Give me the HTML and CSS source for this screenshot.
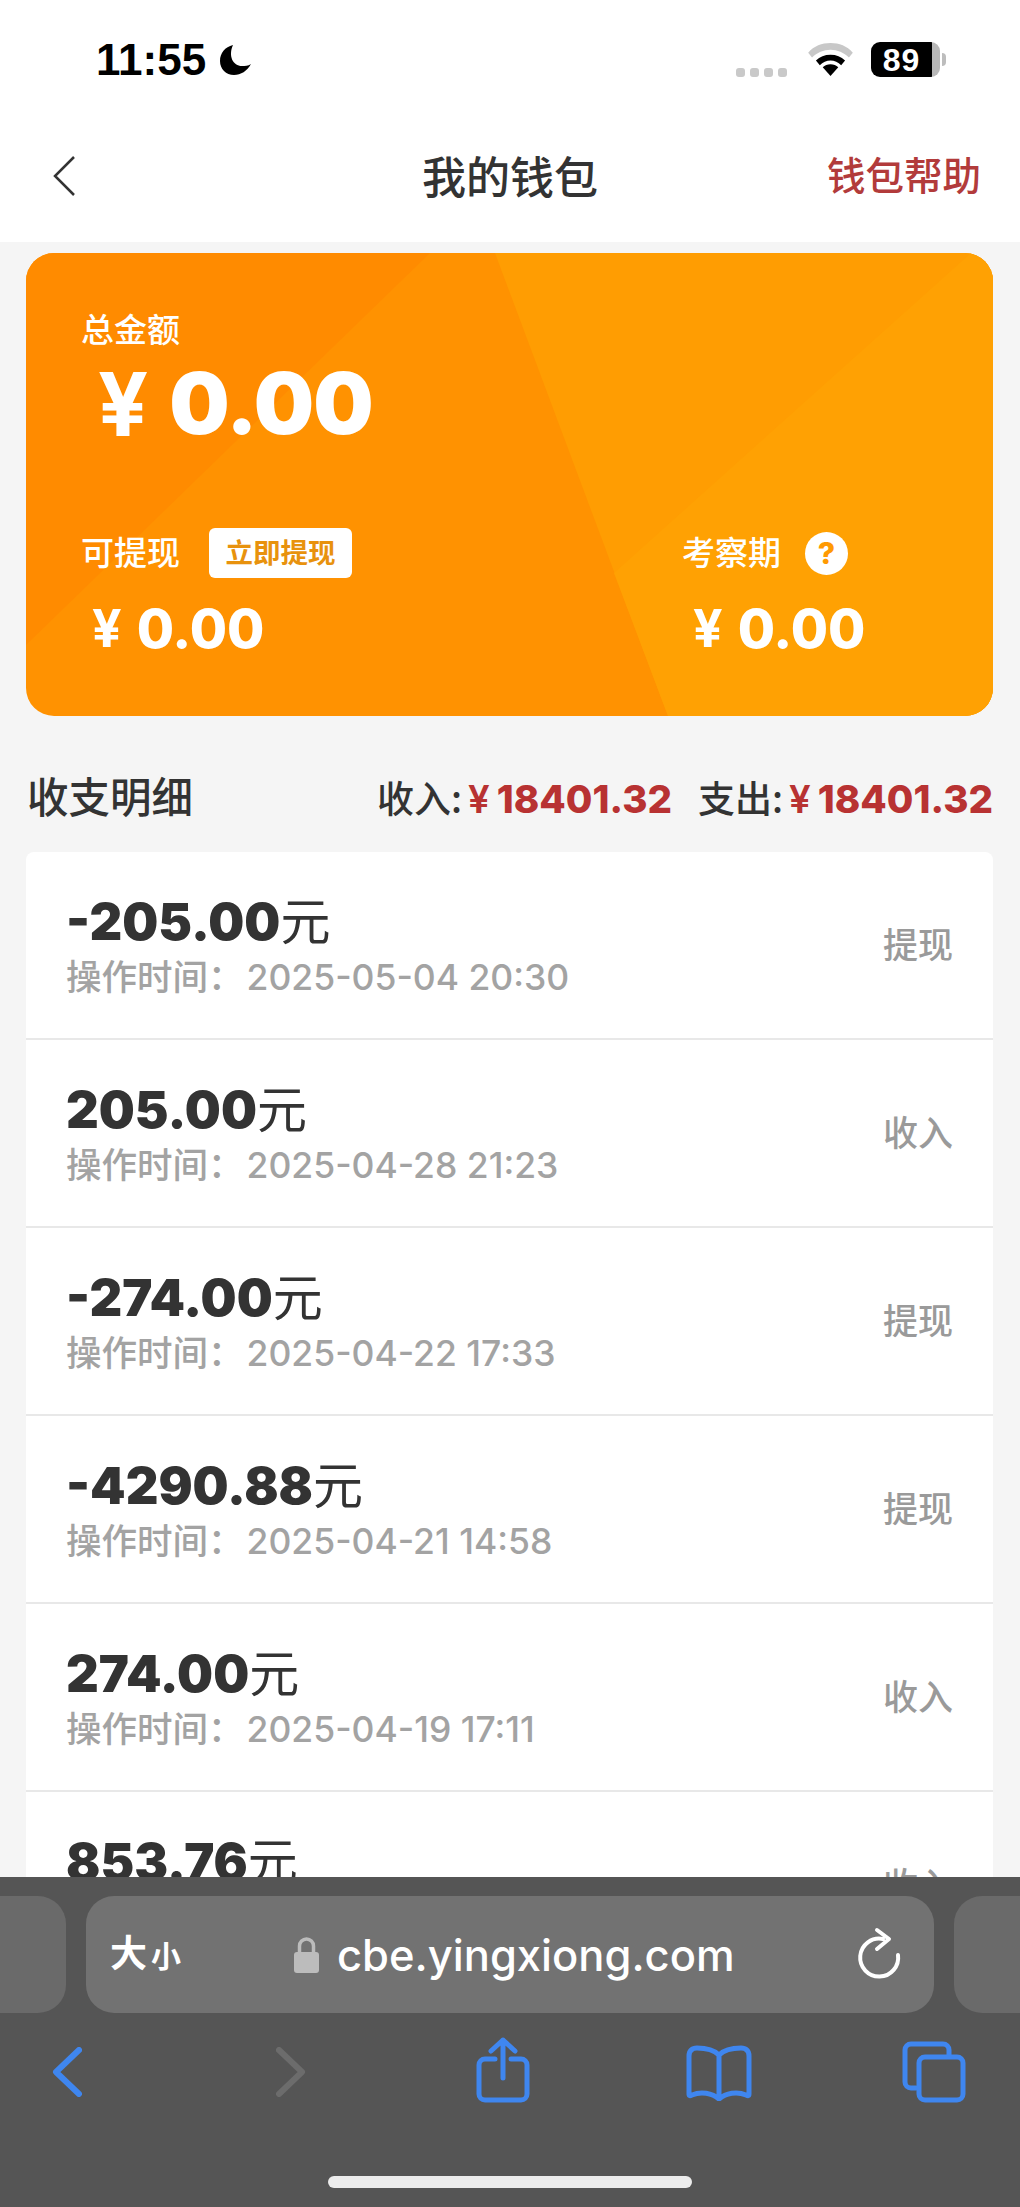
FILE: index.html
```html
<!DOCTYPE html>
<html lang="zh">
<head>
<meta charset="utf-8">
<title>我的钱包</title>
<link rel="stylesheet" href="styles.css">
</head>
<body>
<div class="page">
  <header class="top">
    <div class="status">
      <div class="status-left">
        <span class="clock">11:55</span>
        <svg class="moon" viewBox="0 0 32 32"><path d="M13 1C5 3 0 9 0 17c0 8 6 14 14 14 7 0 13-4 17-11-3 2-6 2-9 2C13 22 8 12 13 1z"/></svg>
      </div>
      <div class="status-right">
        <span class="dots"><i></i><i></i><i></i><i></i></span>
        <svg class="wifi" viewBox="0 0 46 34"><path class="wifi-off" d="M23 0C14 0 6 3 0 10l4 5C9 10 16 7 23 7s14 3 19 8l4-5C40 3 32 0 23 0z"/><path d="M23 12c-6 0-11 2-15 6l4 5c3-3 7-5 11-5s8 2 11 5l4-5c-4-4-9-6-15-6z"/><path d="M23 22c-3 0-6 1-8 3l8 9 8-9c-2-2-5-3-8-3z"/></svg>
        <span class="battery"><b>89</b></span>
      </div>
    </div>
    <nav class="nav">
      <svg class="nav-back" viewBox="0 0 24 40"><path d="M22 1 3 20l19 19"/></svg>
      <h1>我的钱包</h1>
      <a class="nav-help">钱包帮助</a>
    </nav>
  </header>

  <main class="content">
    <section class="card">
      <svg class="card-bg" viewBox="0 0 967 463" preserveAspectRatio="none">
        <rect width="967" height="463" fill="#ff9201"/>
        <path d="M0 0H404L0 392z" fill="#ff8b00"/>
        <path d="M469 0H967V463H642z" fill="#ff9d02"/>
        <path d="M945 0H967V463H642L588 320z" fill="#ffa103"/>
      </svg>
      <div class="card-total">
        <div class="card-label">总金额</div>
        <div class="big-amount"><span class="yen">¥</span><span>0.00</span></div>
      </div>
      <div class="card-sub">
        <div class="sub">
          <div class="sub-head"><span class="card-label">可提现</span><span class="btn">立即提现</span></div>
          <div class="sub-amount"><span class="yen">¥</span><span>0.00</span></div>
        </div>
        <div class="sub">
          <div class="sub-head"><span class="card-label">考察期</span><span class="help">?</span></div>
          <div class="sub-amount"><span class="yen">¥</span><span>0.00</span></div>
        </div>
      </div>
    </section>

    <section class="summary">
      <h2>收支明细</h2>
      <div class="totals">
        <span class="total">收入:<em><span class="yen">¥</span>18401.32</em></span>
        <span class="total">支出:<em><span class="yen">¥</span>18401.32</em></span>
      </div>
    </section>

    <section class="list">
      <article class="row"><div><div class="amt"><b>-205.00</b>元</div><div class="when">操作时间：<span>2025-05-04 20:30</span></div></div><span class="kind">提现</span></article>
      <article class="row"><div><div class="amt"><b>205.00</b>元</div><div class="when">操作时间：<span>2025-04-28 21:23</span></div></div><span class="kind">收入</span></article>
      <article class="row"><div><div class="amt"><b>-274.00</b>元</div><div class="when">操作时间：<span>2025-04-22 17:33</span></div></div><span class="kind">提现</span></article>
      <article class="row"><div><div class="amt"><b>-4290.88</b>元</div><div class="when">操作时间：<span>2025-04-21 14:58</span></div></div><span class="kind">提现</span></article>
      <article class="row"><div><div class="amt"><b>274.00</b>元</div><div class="when">操作时间：<span>2025-04-19 17:11</span></div></div><span class="kind">收入</span></article>
      <article class="row"><div><div class="amt"><b>853.76</b>元</div><div class="when"></div></div><span class="kind">收入</span></article>
    </section>
  </main>

  <footer class="browser">
    <div class="tabs-strip">
      <div class="pill pill-side"></div>
      <div class="pill pill-main">
        <span class="aa"><span class="aa-big">大</span><span class="aa-small">小</span></span>
        <span class="addr">
          <svg class="lock" viewBox="0 0 25 36"><rect class="lock-body" y="15" width="25" height="21" rx="3"/><path class="lock-hook" d="M5.500 16V9a7 7 0 0 1 14 0v7"/></svg>
          <span class="url">cbe.yingxiong.com</span>
        </span>
        <svg class="reload" viewBox="0 0 50 54"><path d="M43 28A19 19 0 1 1 28 12M22 3l12 9-12 10"/></svg>
      </div>
      <div class="pill pill-side"></div>
    </div>
    <div class="tools">
      <svg class="tool t-back" viewBox="0 0 30 50"><path d="M27 3 4 25l23 22"/></svg>
      <svg class="tool t-fwd" viewBox="0 0 30 50"><path d="M3 3l23 22L3 47"/></svg>
      <svg class="tool t-share" viewBox="0 0 54 66"><path d="M19 22H9a6 6 0 0 0-6 6v29a6 6 0 0 0 6 6h36a6 6 0 0 0 6-6V28a6 6 0 0 0-6-6H35M27 41V3M15 14 27 3l12 11"/></svg>
      <svg class="tool t-book" viewBox="0 0 66 56"><path d="M33 50V10C28 5 20 3 11 3 6 3 3 6 3 11v38c0 2 1 2 3 1 9-4 20-2 27 4 7-6 18-8 27-4 2 1 3 1 3-1V11c0-5-3-8-8-8-9 0-17 2-22 7"/></svg>
      <svg class="tool t-tabs" viewBox="0 0 64 62"><path d="M14 47H9a6 6 0 0 1-6-6V9a6 6 0 0 1 6-6h32a6 6 0 0 1 6 6v5"/><rect x="17" y="16" width="44" height="43" rx="6"/></svg>
    </div>
    <div class="home"></div>
  </footer>
</div>
</body>
</html>
```
FILE: styles.css
```css
* { box-sizing: border-box; }
html, body { margin: 0; padding: 0; }
body { font-family: "Inter", "Noto Sans CJK SC", sans-serif; background: #f5f5f5; color: #333; }
.page { position: relative; width: 1020px; height: 2207px; overflow: hidden; background: #f5f5f5; }

.top { background: #fff; height: 242px; }
.status { height: 122px; display: flex; justify-content: space-between; align-items: flex-start; padding: 39px 80px 0 96px; }
.status-left { display: flex; align-items: center; gap: 14px; }
.clock { font-family: "Liberation Sans", sans-serif; font-weight: 700; font-size: 44px; line-height: 42px; color: #000; }
.moon { width: 32px; height: 32px; fill: #000; }
.status-right { display: flex; align-items: flex-start; padding-top: 4px; }
.dots { display: flex; gap: 5px; margin-right: 21px; margin-top: 25px; }
.dots i { width: 9px; height: 9px; border-radius: 3px; background: #c9c9c9; }
.wifi { width: 45px; height: 33px; fill: #000; margin-right: 18px; }
.wifi .wifi-off { fill: #c8c8c8; }
.battery { position: relative; width: 69px; height: 35px; margin-top: -1px; border-radius: 9px; background: linear-gradient(90deg, #000 88%, #b8b8b8 88%); display: flex; align-items: center; justify-content: center; padding-right: 8px; }
.battery::after { content: ""; position: absolute; right: -6px; top: 11px; width: 4px; height: 13px; border-radius: 0 4px 4px 0; background: #bdbdbd; }
.battery b { font-family: "Liberation Sans", sans-serif; font-size: 32px; line-height: 32px; color: #fff; letter-spacing: 1px; }

.nav { position: relative; height: 120px; display: flex; align-items: center; justify-content: center; padding-bottom: 8px; }
.nav-back { position: absolute; left: 52px; top: 34px; width: 24px; height: 40px; fill: none; stroke: #333; stroke-width: 2.500; }
.nav h1 { margin: 0; font-size: 44px; font-weight: 500; line-height: 60px; color: #333; }
.nav-help { position: absolute; right: 39px; top: 24px; font-size: 38.500px; font-weight: 500; line-height: 60px; color: #b23b3b; }

.content { padding: 11px 27px 0 26px; }
.card { position: relative; height: 463px; border-radius: 28px; overflow: hidden; color: #fff; padding: 52px 55px 0; }
.card-bg { position: absolute; left: 0; top: 0; width: 100%; height: 100%; }
.card-total, .card-sub { position: relative; }
.card-label { font-size: 33px; font-weight: 500; line-height: 50px; color: #fff; }
.big-amount { display: flex; align-items: center; height: 84px; margin-top: 7px; padding-left: 17px; font-family: "Inter", sans-serif; font-weight: 900; font-size: 85px; line-height: 84px; letter-spacing: -1px; }
.big-amount .yen { margin-right: 22px; font-weight: 700; font-size: 88px; }
.card-sub { display: flex; margin-top: 81px; }
.sub:first-child { width: 601px; }
.sub-head { display: flex; align-items: center; height: 52px; }
.btn { margin-left: 29px; width: 143px; height: 50px; border-radius: 6px; background: #fff; color: #e8920d; font-size: 27.500px; font-weight: 700; text-align: center; line-height: 50px; }
.help { margin-left: 24px; width: 43px; height: 43px; border-radius: 50%; background: #fff; color: #ff9a02; font-size: 30px; font-weight: 800; text-align: center; line-height: 43px; }
.sub-amount { display: flex; align-items: center; height: 52px; margin-top: 24px; padding-left: 11px; font-weight: 800; font-size: 54px; line-height: 52px; }
.sub-amount .yen { margin-right: 15px; font-weight: 700; font-size: 52px; }

.summary { display: flex; justify-content: space-between; align-items: center; height: 136px; padding: 27px 0 0 1px; }
.summary h2 { margin: 0; font-size: 41.500px; font-weight: 500; line-height: 56px; color: #333; }
.totals { display: flex; gap: 26px; }
.total { font-size: 37px; font-weight: 500; color: #333; line-height: 48px; font-family: "Noto Sans CJK SC", sans-serif; }
.total em { font-family: "Inter", sans-serif; font-size: 38.500px; font-style: normal; font-weight: 800; color: #b83232; margin-left: 6px; }
.total .yen { margin-right: 7px; font-weight: 600; }

.list { background: #fff; border-radius: 8px 8px 0 0; }
.row { height: 188px; display: flex; justify-content: space-between; align-items: center; padding: 4px 40px 0 40px; border-bottom: 2px solid #e8e8e8; }
.amt { font-size: 50px; line-height: 58px; color: #333; }
.amt b { font-family: "Inter", sans-serif; font-weight: 900; font-size: 50.700px; }
.when { margin-top: 4px; min-height: 46px; font-size: 35.500px; line-height: 46px; color: #a3a3a3; font-weight: 500; }
.when span { margin-left: 3px; font-family: "Inter", sans-serif; font-weight: 500; }
.kind { margin-top: -9px; font-size: 35px; color: #9a9a9a; font-weight: 500; }

.browser { position: absolute; left: 0; right: 0; bottom: 0; height: 330px; background: #555; padding-top: 19px; }
.tabs-strip { display: flex; gap: 20px; margin-left: -40px; width: 1100px; }
.pill { height: 117px; background: #727272; border-radius: 28px; }
.pill-side { width: 106px; background: #6a6a6a; flex: none; }
.pill-main { width: 848px; flex: none; position: relative; }
.aa { position: absolute; left: 24px; top: 38px; color: #fff; display: flex; align-items: baseline; font-weight: 700; }
.aa-big { font-size: 37px; line-height: 40px; }
.aa-small { font-size: 30px; line-height: 40px; margin-left: 4px; }
.addr { position: absolute; left: 208px; top: 29px; display: flex; align-items: center; gap: 18px; }
.lock { width: 25px; height: 36px; }
.lock-body { fill: #bcbcbc; }
.lock-hook { fill: none; stroke: #bcbcbc; stroke-width: 3.500; }
.url { font-family: "Inter", sans-serif; font-size: 43.500px; line-height: 60px; color: #fff; font-weight: 500; }
.reload { position: absolute; right: 29px; top: 31px; width: 50px; height: 54px; fill: none; stroke: #fff; stroke-width: 4; stroke-linecap: round; stroke-linejoin: round; }

.tools { position: relative; height: 70px; margin-top: 24px; }
.tool { position: absolute; fill: none; stroke: #3f86ef; stroke-width: 5; stroke-linecap: round; stroke-linejoin: round; }
.t-back { left: 52px; top: 10px; width: 30px; height: 50px; stroke-width: 6; }
.t-fwd { left: 276px; top: 10px; width: 30px; height: 50px; stroke: #6c6c6c; stroke-width: 6; }
.t-share { left: 476px; top: 0; width: 54px; height: 66px; }
.t-book { left: 686px; top: 8px; width: 66px; height: 56px; }
.t-tabs { left: 902px; top: 4px; width: 64px; height: 62px; }
.home { position: absolute; left: 328px; top: 299px; width: 364px; height: 12px; border-radius: 6px; background: #ececec; }
```
